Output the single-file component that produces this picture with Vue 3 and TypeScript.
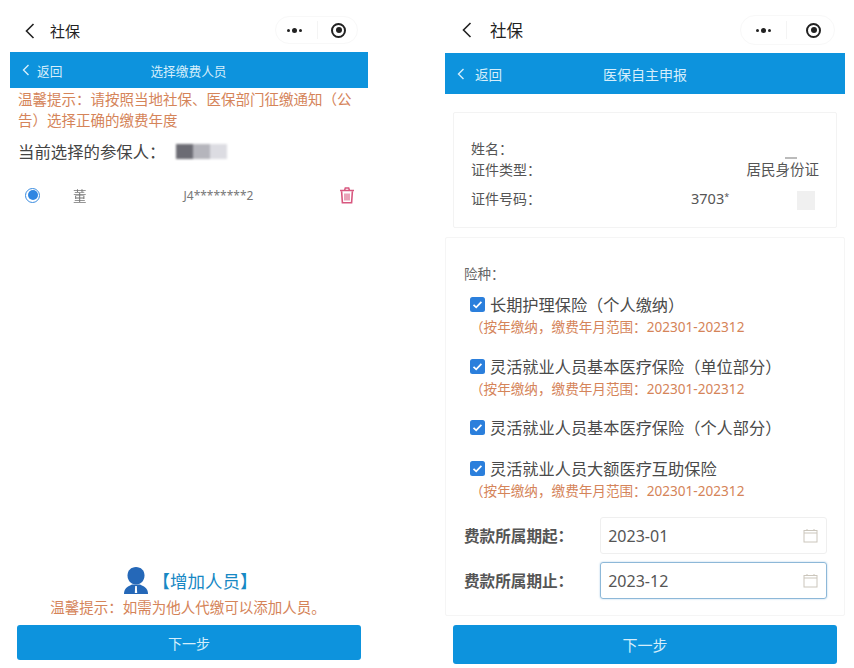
<template>
  <div class="screen">
    <section class="phone left">
      <header class="wx-bar">
        <svg class="wx-back" width="10" height="16" viewBox="0 0 10 16"><path d="M8.5 1 L1.5 8 L8.5 15" fill="none" stroke="#222" stroke-width="1.6" /></svg>
        <span class="wx-title">社保</span>
        <div class="capsule">
          <span class="dots"><i></i><b></b><i></i></span>
          <span class="cap-line"></span>
          <span class="target"><em></em></span>
        </div>
      </header>
      <div class="nav">
        <span class="nav-back">
          <svg width="8" height="12" viewBox="0 0 8 12"><path d="M6.5 1 L1.5 6 L6.5 11" fill="none" stroke="#d5eefb" stroke-width="1.4" /></svg>
          返回
        </span>
        <span class="nav-title">选择缴费人员</span>
      </div>
      <p class="warn">温馨提示：请按照当地社保、医保部门征缴通知（公告）选择正确的缴费年度</p>
      <div class="current">当前选择的参保人：<span class="smudge"></span></div>
      <div class="person">
        <span class="radio"><i></i></span>
        <span class="person-name">董</span>
        <span class="person-id">J4********2</span>
        <svg class="trash" width="16" height="17" viewBox="0 0 16 17">
          <path d="M1 3.6 H15 M5.5 3.4 L6.3 1 H9.7 L10.5 3.4" fill="none" stroke="#d8577f" stroke-width="1.5" />
          <path d="M2.6 4.2 L3.4 15.8 H12.6 L13.4 4.2" fill="none" stroke="#d8577f" stroke-width="1.6" />
          <path d="M6 6.5 V13.5 M8 6.5 V13.5 M10 6.5 V13.5" stroke="#d8577f" stroke-width="1.1" />
        </svg>
      </div>
      <div class="bottom">
        <div class="add">
          <svg width="24" height="27" viewBox="0 0 24 27">
            <path d="M12 0 C17 0 20.5 3.5 20.5 8.5 C20.5 13 17.5 17.5 12 17.5 C6.5 17.5 3.5 13 3.5 8.5 C3.5 3.5 7 0 12 0 Z" fill="#2568b8" />
            <path d="M0 27 C0 22 2.5 20 8 17.5 L16 17.5 C21.5 20 24 22 24 27 Z" fill="#2568b8" />
            <path d="M11.2 19 H12.8 L13.2 26 H10.8 Z" fill="#fff" />
          </svg>
          <span>【增加人员】</span>
        </div>
        <p class="add-tip">温馨提示：如需为他人代缴可以添加人员。</p>
        <button class="next">下一步</button>
      </div>
    </section>

    <section class="phone right">
      <header class="wx-bar">
        <svg class="wx-back" width="10" height="16" viewBox="0 0 10 16"><path d="M8.5 1 L1.5 8 L8.5 15" fill="none" stroke="#222" stroke-width="1.6" /></svg>
        <span class="wx-title">社保</span>
        <div class="capsule">
          <span class="dots"><i></i><b></b><i></i></span>
          <span class="cap-line"></span>
          <span class="target"><em></em></span>
        </div>
      </header>
      <div class="nav">
        <span class="nav-back">
          <svg width="8" height="12" viewBox="0 0 8 12"><path d="M6.5 1 L1.5 6 L6.5 11" fill="none" stroke="#d5eefb" stroke-width="1.4" /></svg>
          返回
        </span>
        <span class="nav-title">医保自主申报</span>
      </div>
      <div class="info">
        <span class="streak"></span>
        <div class="info-row name">姓名：</div>
        <div class="info-row type"><span>证件类型：</span><span class="type-val">居民身份证</span></div>
        <div class="info-row num"><span>证件号码：</span><span class="num-val">3703<sup>*</sup></span><span class="mask"></span></div>
      </div>
      <div class="form">
        <div class="kind">险种：</div>
        <div v-for="item in kinds" :key="item.name" class="kind-item" :class="{ 'no-note': !item.note }">
          <label class="check-line">
            <svg width="15" height="15" viewBox="0 0 15 15">
              <rect width="15" height="15" rx="2.5" fill="#2b7fdc" />
              <path d="M3.5 7.8 L6.2 10.4 L11.4 4.8" fill="none" stroke="#fff" stroke-width="1.7" />
            </svg>
            {{ item.name }}
          </label>
          <div v-if="item.note" class="note">（按年缴纳，缴费年月范围：202301-202312</div>
        </div>
        <div class="date-row" v-for="d in dates" :key="d.label">
          <span class="date-label">{{ d.label }}</span>
          <div class="date-input" :class="{ focus: d.focus }">
            <span>{{ d.value }}</span>
            <svg width="15" height="15" viewBox="0 0 15 15" fill="none" stroke="#cbc6bc" stroke-width="1">
              <rect x="1" y="2.5" width="13" height="11.5" />
              <path d="M1 5 H14 M4 1 V3 M11 1 V3" />
            </svg>
          </div>
        </div>
      </div>
      <button class="next">下一步</button>
    </section>
  </div>
</template>

<script setup lang="ts">
const kinds = [
  { name: '长期护理保险（个人缴纳）', note: true },
  { name: '灵活就业人员基本医疗保险（单位部分）', note: true },
  { name: '灵活就业人员基本医疗保险（个人部分）', note: false },
  { name: '灵活就业人员大额医疗互助保险', note: true },
]

const dates = [
  { label: '费款所属期起：', value: '2023-01', focus: false },
  { label: '费款所属期止：', value: '2023-12', focus: true },
]
</script>

<style>
html,
body {
  background: #fff;
}
</style>

<style scoped>
.screen {
  display: flex;
  width: 854px;
  height: 668px;
  overflow: hidden;
  background: #fff;
  font-family: "Noto Sans", "Noto Sans CJK SC", sans-serif;
  color: #444;
}

.phone {
  display: flex;
  flex-direction: column;
  position: relative;
}

.left {
  width: 358px;
  margin-left: 10px;
}

.right {
  width: 400px;
  margin-left: 77px;
}

.wx-bar {
  display: flex;
  align-items: center;
  color: #222;
}

.left .wx-bar {
  height: 39px;
  margin-top: 11px;
  margin-bottom: 2px;
  padding-left: 15px;
}

.right .wx-bar {
  height: 39px;
  margin-top: 10px;
  margin-bottom: 4px;
  padding-left: 17px;
}

.wx-title {
  margin-left: 15px;
  font-size: 15px;
}

.right .wx-title {
  margin-left: 18px;
  font-size: 16.5px;
}

.capsule {
  display: flex;
  align-items: center;
  margin-left: auto;
  box-sizing: border-box;
  border: 1px solid #f8f8f8;
}

.left .capsule {
  width: 83px;
  height: 28px;
  margin-right: 10px;
  margin-top: -1px;
  border-radius: 14px;
}

.right .capsule {
  width: 95px;
  height: 30px;
  margin-right: 10px;
  margin-top: 1px;
  border-radius: 15px;
}

.dots {
  display: flex;
  align-items: center;
  gap: 2px;
  margin-left: 11px;
}

.right .dots {
  margin-left: 15px;
}

.dots i {
  width: 3px;
  height: 3px;
  border-radius: 50%;
  background: #222;
}

.dots b {
  width: 5px;
  height: 5px;
  border-radius: 50%;
  background: #222;
}

.cap-line {
  width: 1px;
  height: 18px;
  margin-left: 15px;
  background: #f4f4f4;
}

.target {
  display: flex;
  align-items: center;
  justify-content: center;
  box-sizing: border-box;
  width: 15px;
  height: 15px;
  margin-left: 13px;
  border: 2px solid #222;
  border-radius: 50%;
}

.right .target {
  margin-left: 19px;
}

.target em {
  width: 6px;
  height: 6px;
  border-radius: 50%;
  background: #222;
}

.nav {
  position: relative;
  display: flex;
  align-items: center;
  justify-content: center;
  height: 36px;
  background: #0d93dd;
  color: #d5eefb;
  font-size: 12.7px;
}

.right .nav {
  height: 41px;
  font-size: 14px;
}

.nav-back {
  position: absolute;
  left: 12px;
  display: flex;
  align-items: center;
  gap: 7px;
}

.right .nav-back {
  gap: 10px;
  font-size: 13.5px;
}

.left .nav-title {
  margin-left: -1px;
}

.warn {
  margin: 1px 8px 0;
  font-size: 14.5px;
  line-height: 21px;
  color: #d58459;
}

.current {
  display: flex;
  align-items: center;
  height: 24px;
  margin: 8px 0 0 8px;
  font-size: 16.4px;
  color: #444;
}

.smudge {
  width: 51px;
  height: 15px;
  margin-left: 10px;
  background: linear-gradient(90deg, #6c6c74 0 34%, #b5b5bc 34% 66%, #dcdce2 66% 100%);
  filter: blur(1px);
}

.person {
  display: flex;
  align-items: center;
  height: 34px;
  margin-top: 15px;
  padding-left: 15px;
}

.radio {
  display: flex;
  align-items: center;
  justify-content: center;
  width: 15px;
  height: 15px;
  border: 1px solid #3a8ce0;
  border-radius: 50%;
  box-sizing: border-box;
}

.radio i {
  width: 10px;
  height: 10px;
  border-radius: 50%;
  background: #2f86e2;
}

.person-name {
  margin-left: 33px;
  font-size: 13.5px;
  color: #777;
  filter: blur(0.5px);
}

.person-id {
  margin-left: 97px;
  font-size: 12px;
  color: #777;
}

.trash {
  margin-left: auto;
  margin-right: 13px;
}

.bottom {
  display: flex;
  flex-direction: column;
  align-items: center;
  margin-top: auto;
  margin-bottom: 8px;
}

.add {
  display: flex;
  align-items: center;
  gap: 5px;
  height: 28px;
  margin-left: 3px;
  color: #1788c4;
  font-size: 17.5px;
}

.add-tip {
  margin: 3px 0 0 -2px;
  font-size: 14.5px;
  line-height: 20px;
  color: #d58459;
}

.next {
  width: 344px;
  height: 35px;
  border: none;
  border-radius: 3px;
  background: #0d93dd;
  color: #d5eefb;
  font-family: inherit;
  font-size: 14px;
}

.bottom .next {
  margin-top: 8px;
}

.right > .next {
  width: 384px;
  height: 39px;
  margin: 9px 0 0 8px;
  font-size: 15px;
}

.info {
  position: relative;
  height: 116px;
  margin: 18px 8px 0;
  padding: 24px 17px 0;
  box-sizing: border-box;
  border: 1px solid #f3f3f3;
  border-radius: 2px;
  font-size: 14px;
  color: #555;
}

.streak {
  position: absolute;
  top: 44px;
  right: 39px;
  width: 12px;
  height: 2px;
  background: #bbb;
  filter: blur(0.7px);
}

.info-row {
  display: flex;
  align-items: center;
}

.name,
.type {
  height: 21px;
}

.num {
  height: 20px;
  margin-top: 9px;
}

.type-val {
  margin-left: auto;
  font-size: 14.5px;
}

.num-val {
  position: absolute;
  left: 237px;
  font-size: 14.5px;
}

.num-val sup {
  font-size: 9px;
  vertical-align: 4px;
  line-height: 0;
}

.mask {
  position: absolute;
  right: 21px;
  width: 18px;
  height: 19px;
  margin-top: 5px;
  background: #f0f0f0;
}

.form {
  display: flex;
  flex-direction: column;
  height: 379px;
  margin-top: 9px;
  padding: 25px 17px 0 18px;
  box-sizing: border-box;
  border: 1px solid #f5f5f5;
  border-radius: 2px;
}

.kind {
  height: 20px;
  margin-bottom: 10px;
  font-size: 13.5px;
  color: #666;
}

.kind-item {
  margin-left: 6px;
  margin-bottom: 17px;
}

.kind-item:nth-child(3) {
  margin-bottom: 16px;
}

.kind-item.no-note {
  margin-bottom: 19px;
}

.kind-item:nth-child(5) {
  margin-bottom: 15px;
}

.check-line {
  display: flex;
  align-items: center;
  gap: 5px;
  height: 22px;
  font-size: 16.2px;
  color: #4a4a4a;
}

.note {
  margin-top: 1px;
  font-size: 13.6px;
  line-height: 22px;
  color: #d58459;
}

.date-row {
  display: flex;
  align-items: center;
  height: 37px;
  margin-bottom: 8px;
}

.date-label {
  width: 137px;
  font-size: 15.6px;
  font-weight: 700;
  color: #555;
}

.date-input {
  display: flex;
  align-items: center;
  justify-content: space-between;
  width: 228px;
  height: 37px;
  padding: 0 8px 0 7px;
  box-sizing: border-box;
  border: 1px solid #efefef;
  border-radius: 3px;
  font-size: 16px;
  color: #555;
}

.date-input.focus {
  border: 1px solid #8db8d8;
  box-shadow: 0 0 2px #a9cbe6;
}
</style>
